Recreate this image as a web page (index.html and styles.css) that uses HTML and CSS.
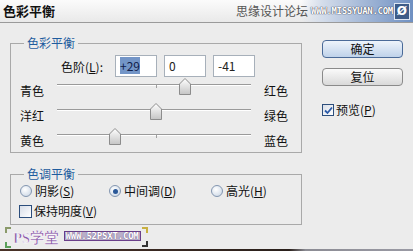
FILE: index.html
```html
<!DOCTYPE html>
<html lang="zh-CN">
<head>
    <meta charset="UTF-8">
    <meta name="viewport" content="width=device-width, initial-scale=1.0">
    <title>色彩平衡</title>
    <link rel="stylesheet" href="styles.css">
</head>
<body>
    <div class="dialog">
        <div class="titlebar">
            <span class="title">色彩平衡</span>
            <div class="brand">
                <span class="brand-cn">思缘设计论坛</span>
                <span class="brand-url">WWW.MISSYUAN.COM</span>
                <span class="brand-icon">Ø</span>
            </div>
        </div>
        <div class="content">
            <div class="panels">
                <fieldset class="group group-color">
                    <legend>色彩平衡</legend>
                    <div class="levels">
                        <span class="levels-label">色阶(<u>L</u>):</span>
                        <span class="field"><span class="sel">+29</span></span>
                        <span class="field">0</span>
                        <span class="field">-41</span>
                    </div>
                    <div class="slider-row">
                        <span class="lbl">青色</span>
                        <div class="slider">
                            <span class="tick"></span>
                            <svg class="thumb" style="left: 122px" width="12" height="17" viewBox="0 0 12 17">
                                <defs>
                                    <linearGradient id="thumbfill" x1="0" y1="0" x2="0" y2="1">
                                        <stop offset="0" stop-color="#ffffff"/>
                                        <stop offset="1" stop-color="#c4c4c4"/>
                                    </linearGradient>
                                </defs>
                                <path d="M0.5 16.5 V6 L6 0.5 L11.5 6 V16.5 Z" fill="url(#thumbfill)" stroke="#8c8c8c"/>
                            </svg>
                        </div>
                        <span class="lbl">红色</span>
                    </div>
                    <div class="slider-row">
                        <span class="lbl">洋红</span>
                        <div class="slider">
                            <span class="tick"></span>
                            <svg class="thumb" style="left: 93px" width="12" height="17" viewBox="0 0 12 17">
                                <path d="M0.5 16.5 V6 L6 0.5 L11.5 6 V16.5 Z" fill="url(#thumbfill)" stroke="#8c8c8c"/>
                            </svg>
                        </div>
                        <span class="lbl">绿色</span>
                    </div>
                    <div class="slider-row">
                        <span class="lbl">黄色</span>
                        <div class="slider">
                            <span class="tick"></span>
                            <svg class="thumb" style="left: 52px" width="12" height="17" viewBox="0 0 12 17">
                                <path d="M0.5 16.5 V6 L6 0.5 L11.5 6 V16.5 Z" fill="url(#thumbfill)" stroke="#8c8c8c"/>
                            </svg>
                        </div>
                        <span class="lbl">蓝色</span>
                    </div>
                </fieldset>
                <fieldset class="group group-tone">
                    <legend>色调平衡</legend>
                    <div class="radios">
                        <span class="opt opt-shadow"><span class="radio"></span>阴影(<u>S</u>)</span>
                        <span class="opt opt-mid"><span class="radio checked"></span>中间调(<u>D</u>)</span>
                        <span class="opt"><span class="radio"></span>高光(<u>H</u>)</span>
                    </div>
                    <div class="opt keep"><span class="box"></span>保持明度(<u>V</u>)</div>
                </fieldset>
            </div>
            <div class="actions">
                <button class="btn btn-default">确定</button>
                <button class="btn">复位</button>
                <div class="opt preview">
                    <span class="box box-small checked">
                        <svg width="9" height="9" viewBox="0 0 9 9"><path d="M1 4.5 L3.5 7 L8 1.5" fill="none" stroke="#2b5aa8" stroke-width="1.8"/></svg>
                    </span>预览(<u>P</u>)
                </div>
            </div>
        </div>
        <div class="watermark">
            <span class="wm-corner c-tl"></span>
            <span class="wm-corner c-tr"></span>
            <span class="wm-corner c-bl"></span>
            <span class="wm-corner c-br"></span>
            <span class="wm-name">PS学堂</span>
            <span class="wm-url">WWW.52PSXT.COM</span>
        </div>
        <div class="strip"></div>
    </div>
</body>
</html>
```

FILE: styles.css
```css
body {
    margin: 0;
    font-family: "Noto Sans CJK SC", "Noto Sans", sans-serif;
    font-size: 12px;
    color: #111;
}
.dialog {
    position: relative;
    width: 413px;
    height: 251px;
    overflow: hidden;
    background: #ececec;
}
.titlebar {
    height: 22px;
    border-bottom: 1px solid #9a9a9a;
    background: linear-gradient(#fbfbfb, #e9e9e9);
    display: flex;
    justify-content: space-between;
    align-items: center;
}
.title {
    margin-left: 3px;
    font-size: 13px;
    font-weight: bold;
    line-height: 22px;
}
.brand {
    height: 22px;
    width: 180px;
    display: flex;
    align-items: center;
    background: linear-gradient(90deg, rgba(255,255,255,0) 38%, #d3dcea 50%, #a9bcd9 70%, #6f90c2 100%);
}
.brand-cn {
    margin-left: 3px;
    color: #555;
    font-size: 12px;
    line-height: 14px;
}
.brand-url {
    margin-left: 3px;
    font-family: "DejaVu Sans Mono", monospace;
    font-size: 9px;
    font-weight: bold;
    color: #fff;
    letter-spacing: -0.3px;
    text-shadow: 0 0 1px #334, 0 0 1px #334;
}
.brand-icon {
    margin-left: 1px;
    width: 14px;
    height: 15px;
    background: #3d5c88;
    border: 1px solid #dde6f2;
    color: #fff;
    font-family: "DejaVu Sans", sans-serif;
    font-weight: bold;
    font-size: 12px;
    line-height: 15px;
    text-align: center;
}
.content {
    display: flex;
}
.panels {
    margin-left: 10px;
    width: 292px;
}
.group {
    margin: 0;
    padding: 0;
    border: 1px solid #a9a9a9;
    min-width: 0;
}
.group legend {
    margin-left: 13px;
    padding: 0 3px;
    line-height: 16px;
    color: #1f5c9e;
    font-size: 12px;
}
.group-color {
    margin-top: 12px;
}
.group-tone {
    margin-top: 13px;
    padding-bottom: 5px;
}
.levels {
    display: flex;
    align-items: center;
    margin-top: 4px;
    height: 22px;
    gap: 7px;
}
.levels-label {
    width: 92px;
    text-align: right;
    margin-right: 5px;
}
.field {
    width: 42px;
    height: 22px;
    box-sizing: border-box;
    border: 1px solid #a7b0ba;
    background: #fff;
    padding-left: 4px;
    line-height: 20px;
    color: #222;
}
.sel {
    background: #7395c7;
    color: #10204a;
}
.slider-row {
    display: flex;
    align-items: center;
    height: 25px;
}
.slider-row:first-of-type {
    margin-top: 7px;
}
.lbl {
    width: 38px;
    margin-left: 9px;
    line-height: 16px;
    padding-top: 3px;
}
.slider-row .lbl:last-child {
    margin-left: 13px;
}
.slider {
    position: relative;
    width: 199px;
    height: 25px;
}
.slider::before {
    content: "";
    position: absolute;
    left: 0;
    right: 0;
    top: 7px;
    height: 1px;
    background: #9a9a9a;
    border-bottom: 1px solid #fff;
}
.tick {
    position: absolute;
    left: 99px;
    top: 8px;
    width: 1px;
    height: 3px;
    background: #a0a0a0;
}
.thumb {
    position: absolute;
    top: 1px;
}
.radios {
    display: flex;
    margin-top: 1px;
    height: 16px;
}
.opt {
    display: flex;
    align-items: center;
    line-height: 16px;
}
.opt-shadow {
    margin-left: 9px;
    width: 89px;
}
.opt-mid {
    width: 102px;
}
.radio {
    width: 10px;
    height: 10px;
    border-radius: 50%;
    border: 1px solid #8396b0;
    background: radial-gradient(circle at 40% 35%, #ffffff, #c6d3e3);
    margin-right: 3px;
    position: relative;
}
.radio.checked::after {
    content: "";
    position: absolute;
    left: 2.5px;
    top: 2.5px;
    width: 5px;
    height: 5px;
    border-radius: 50%;
    background: #2a5898;
}
.keep {
    margin-top: 4px;
    margin-left: 8px;
    height: 16px;
}
.box {
    width: 13px;
    height: 13px;
    box-sizing: border-box;
    border: 1px solid #2c4e7c;
    background: linear-gradient(135deg, #d8dee8, #ffffff);
    margin-right: 2px;
    display: flex;
    align-items: center;
    justify-content: center;
}
.box-small {
    width: 12px;
    height: 12px;
}
.actions {
    margin-left: 20px;
    padding-top: 17px;
    display: flex;
    flex-direction: column;
}
.btn {
    width: 81px;
    height: 18px;
    padding: 0;
    border: 1px solid #8a8a8a;
    border-radius: 4px;
    background: linear-gradient(#fafafa, #d9d9d9);
    font-family: inherit;
    font-size: 12px;
    line-height: 16px;
    color: #111;
}
.btn + .btn {
    margin-top: 10px;
}
.btn-default {
    border-color: #4a6a98;
    background: linear-gradient(#eef4fb, #bfd2ea);
}
.preview {
    margin-top: 16px;
    margin-left: 0;
}
.watermark {
    position: absolute;
    left: 4px;
    top: 226px;
    width: 140px;
    height: 20px;
    display: flex;
    align-items: center;
}
.wm-name {
    margin-left: 9px;
    font-family: "Liberation Serif", "Noto Sans CJK SC", serif;
    font-size: 15px;
    font-weight: bold;
    color: #8a5aa8;
    -webkit-text-stroke: 0.6px #fff;
    letter-spacing: -0.5px;
}
.wm-url {
    margin-left: 5px;
    padding: 0 1px;
    background: #b9aec8;
    border: 1px solid #6a3f8a;
    font-family: "DejaVu Sans Mono", monospace;
    font-size: 9px;
    font-weight: bold;
    line-height: 8px;
    color: #fff;
    letter-spacing: -0.2px;
    text-shadow: 0 0 1px #4a2a6a;
}
.wm-corner {
    position: absolute;
    width: 4px;
    height: 4px;
}
.c-tl {
    left: 1px;
    top: 1px;
    border-left: 2px solid #8a9a6a;
    border-top: 2px solid #8a9a6a;
}
.c-tr {
    right: -4px;
    top: 1px;
    border-right: 2px solid #c8b040;
    border-top: 2px solid #c8b040;
}
.c-bl {
    left: 1px;
    bottom: -2px;
    border-left: 2px solid #5aa05a;
    border-bottom: 2px solid #5aa05a;
}
.c-br {
    right: -4px;
    bottom: -1px;
    border-right: 2px solid #333;
    border-bottom: 2px solid #333;
}
.strip {
    position: absolute;
    left: 0;
    right: 0;
    bottom: 0;
    height: 2px;
    background: linear-gradient(90deg, #4a3328 0, #2a201c 70%, #8c8c94 74%, #9a9aa4 100%);
}
```
